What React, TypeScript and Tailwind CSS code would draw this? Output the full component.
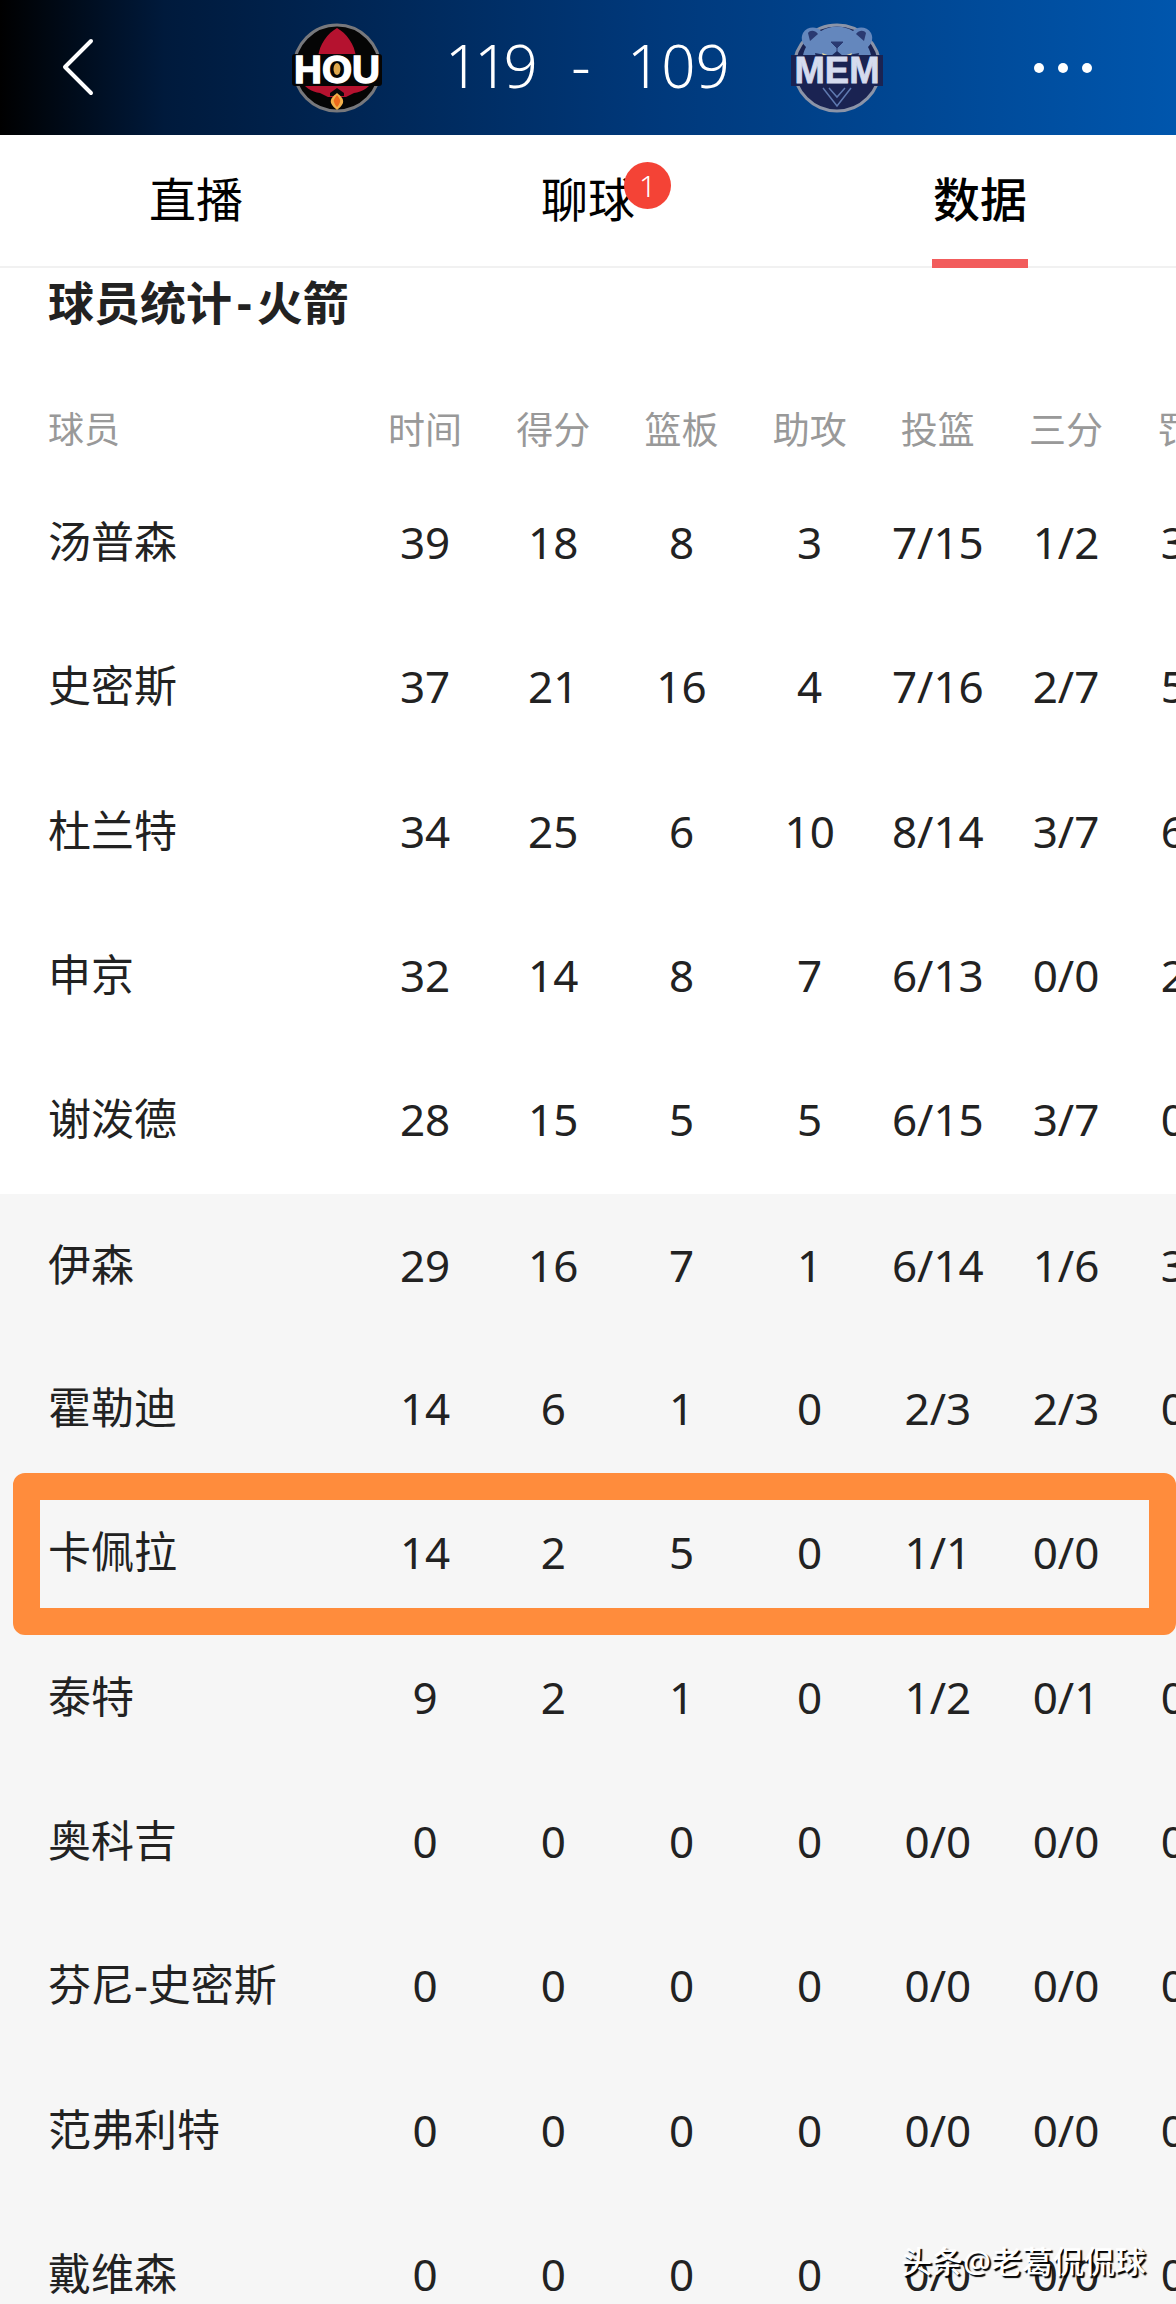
const cjk = { fontFamily: '"Noto Sans", "Noto Sans CJK SC", sans-serif' };

const heads = ['时间', '得分', '篮板', '助攻', '投篮', '三分', '罚球'];
const rows: string[][] = [
  ['汤普森', '39', '18', '8', '3', '7/15', '1/2', '3/4'],
  ['史密斯', '37', '21', '16', '4', '7/16', '2/7', '5/5'],
  ['杜兰特', '34', '25', '6', '10', '8/14', '3/7', '6/6'],
  ['申京', '32', '14', '8', '7', '6/13', '0/0', '2/2'],
  ['谢泼德', '28', '15', '5', '5', '6/15', '3/7', '0/0'],
  ['伊森', '29', '16', '7', '1', '6/14', '1/6', '3/3'],
  ['霍勒迪', '14', '6', '1', '0', '2/3', '2/3', '0/0'],
  ['卡佩拉', '14', '2', '5', '0', '1/1', '0/0', '0/0'],
  ['泰特', '9', '2', '1', '0', '1/2', '0/1', '0/0'],
  ['奥科吉', '0', '0', '0', '0', '0/0', '0/0', '0/0'],
  ['芬尼-史密斯', '0', '0', '0', '0', '0/0', '0/0', '0/0'],
  ['范弗利特', '0', '0', '0', '0', '0/0', '0/0', '0/0'],
  ['戴维森', '0', '0', '0', '0', '0/0', '0/0', '0/0'],
];

function HouLogo() {
  return (
    <svg width="92" height="92" viewBox="0 0 92 92" className="shrink-0">
      <circle cx="46" cy="46" r="43" fill="#050505" stroke="#77787c" strokeWidth="3" />
      <path d="M46 6 C55 11 64 22 65 36 L65 58 C70 60 77 60 84 55 C80 65 71 70 63 71 L55 75 L37 75 L29 71 C21 70 12 65 8 55 C15 60 22 60 27 58 L27 36 C28 22 37 11 46 6 Z" fill="#b5122f" />
      <path d="M46 66 L53 71 L53 74 L39 74 L39 71 Z" fill="#0a0a0a" />
      <path d="M46 71 C50 74 53 77 52 81 C51 84 48 86 46 88 C44 86 41 84 40 81 C39 77 42 74 46 71 Z" fill="#f2b04a" />
      <path d="M46 73 C48 76 50 78 49 80 C48 83 47 84 46 85 C45 84 44 83 43 80 C42 78 44 76 46 73 Z" fill="#ee6a1c" />
      <rect x="1" y="32" width="90" height="32" rx="3" fill="#050505" />
      <text x="46" y="61" textAnchor="middle" fontFamily="Liberation Sans, sans-serif" fontWeight="700" fontSize="39" fill="#fff" stroke="#fff" strokeWidth="1.4" textLength="86" lengthAdjust="spacingAndGlyphs">HOU</text>
      <ellipse cx="46" cy="47" rx="3.5" ry="6" fill="#e2a94c" />
    </svg>
  );
}

function MemLogo() {
  return (
    <svg width="92" height="92" viewBox="0 0 92 92" className="shrink-0">
      <circle cx="46" cy="46" r="43" fill="#1a2352" stroke="#8b94a8" strokeWidth="3" />
      <path d="M12 11 C16 4 26 4 30 9 C40 3 52 3 62 9 C66 4 76 4 80 11 C83 17 80 22 77 25 C81 32 81 40 80 46 L12 46 C11 40 11 32 15 25 C12 22 9 17 12 11 Z" fill="#6487bd" />
      <path d="M17 11 C19 8 24 8 27 12 L19 19 Z M75 11 C73 8 68 8 65 12 L73 19 Z" fill="#2a3a72" />
      <path d="M24 31 L40 34 L46 29 L52 34 L68 31 L66 40 L26 40 Z" fill="#1c2a5c" />
      <path d="M31 31 L39 34 L33 36 Z M61 31 L53 34 L59 36 Z" fill="#e6d79a" />
      <path d="M40 20 L52 20 L46 26 Z M46 26 L46 30" fill="#2a3a72" stroke="#2a3a72" />
      <rect x="0" y="33" width="92" height="31" fill="#1a2352" />
      <text x="46" y="61" textAnchor="middle" fontFamily="Liberation Sans, sans-serif" fontWeight="700" fontSize="37" fill="#d5dbee" stroke="#d5dbee" strokeWidth="0.8" textLength="85" lengthAdjust="spacingAndGlyphs">MEM</text>
      <path d="M32 66 L46 84 L60 66 M38 66 L46 75 L54 66" fill="none" stroke="#5f79b0" strokeWidth="1.5" />
    </svg>
  );
}

export default function App() {
  return (
    <div className="h-[2304px] w-[1176px] overflow-hidden bg-white text-[#222222]" style={cjk}>
      <header className="flex h-[135px] items-center bg-[linear-gradient(90deg,#000000_0%,#001a3c_14%,#002757_32%,#00387a_55%,#0056ad_100%)]">
        <svg width="36" height="58" viewBox="0 0 36 58" fill="none" className="ml-[60px] mb-[1px] shrink-0">
          <path d="M31 3 L5 29 L31 55" stroke="#ffffff" strokeWidth="4" strokeLinecap="round" strokeLinejoin="round" />
        </svg>
        <div className="ml-[195px]"><HouLogo /></div>
        <div className="mb-[5px] ml-[62px] flex items-center text-[60px] font-light leading-none text-white">
          <span className="w-[90px] tracking-[-5px]">119</span>
          <span className="w-[92px] text-center">-</span>
          <span className="w-[98px]">109</span>
        </div>
        <div className="ml-[66px]"><MemLogo /></div>
        <div className="ml-[151px] flex gap-[14px]">
          <span className="h-[10px] w-[10px] rounded-full bg-white" />
          <span className="h-[10px] w-[10px] rounded-full bg-white" />
          <span className="h-[10px] w-[10px] rounded-full bg-white" />
        </div>
      </header>

      <nav className="flex h-[133px] border-b-2 border-[#f1f1f1] pb-[3px] text-[47px] text-black">
        <div className="flex w-[392px] items-center justify-center">直播</div>
        <div className="relative flex w-[392px] items-center justify-center">
          聊球
          <span className="absolute left-[232px] top-[27px] flex h-[47px] w-[47px] items-center justify-center rounded-full bg-[#f44336] text-[30px] font-light leading-none text-white">1</span>
        </div>
        <div className="relative flex w-[392px] items-center justify-center font-medium">
          数据
          <span className="absolute bottom-[-5px] left-[148px] h-[9px] w-[96px] bg-[#f25c5c]" />
        </div>
      </nav>

      <h1 className="flex h-[68px] items-center pl-[48px] text-[46px] font-bold leading-none text-[#222222]">
        球员统计<span className="mx-[5px]">-</span>火箭
      </h1>

      <div className="flex h-[134px] items-center pt-[54px] text-[37px] text-[#999999]">
        <div className="w-[361px] shrink-0 pl-[48px] text-[36px]">球员</div>
        {heads.map((h) => (
          <div key={h} className="w-[128.2px] shrink-0 whitespace-nowrap text-center">{h}</div>
        ))}
      </div>

      <div className="relative">
        {rows.map((r, i) => (
          <div
            key={r[0]}
            className={`relative flex items-center text-[44px] ${
              i === 4 ? 'h-[147px] pb-[2.67px] bg-white' : i === 5 ? 'h-[141.66px] bg-[#f6f6f6]' : i > 5 ? 'h-[144.33px] bg-[#f6f6f6]' : 'h-[144.33px] bg-white'
            }`}
          >
            <div className="w-[361px] shrink-0 pl-[48px] text-[43px]">{r[0]}</div>
            {r.slice(1).map((v, j) => (
              <div key={j} className="w-[128.2px] shrink-0 whitespace-nowrap text-center">{v}</div>
            ))}
            {i === 7 && (
              <div className="absolute bottom-[-10px] left-[13px] right-0 top-[-7px] z-10 rounded-[12px] border-[27px] border-[#ff8c3c]" />
            )}
          </div>
        ))}
        <div className="absolute left-[901px] top-[1776px] z-10 whitespace-nowrap text-[31px] font-medium leading-none text-white [text-shadow:2px_2px_1px_#000]">头条@老葛侃侃球</div>
      </div>
    </div>
  );
}
